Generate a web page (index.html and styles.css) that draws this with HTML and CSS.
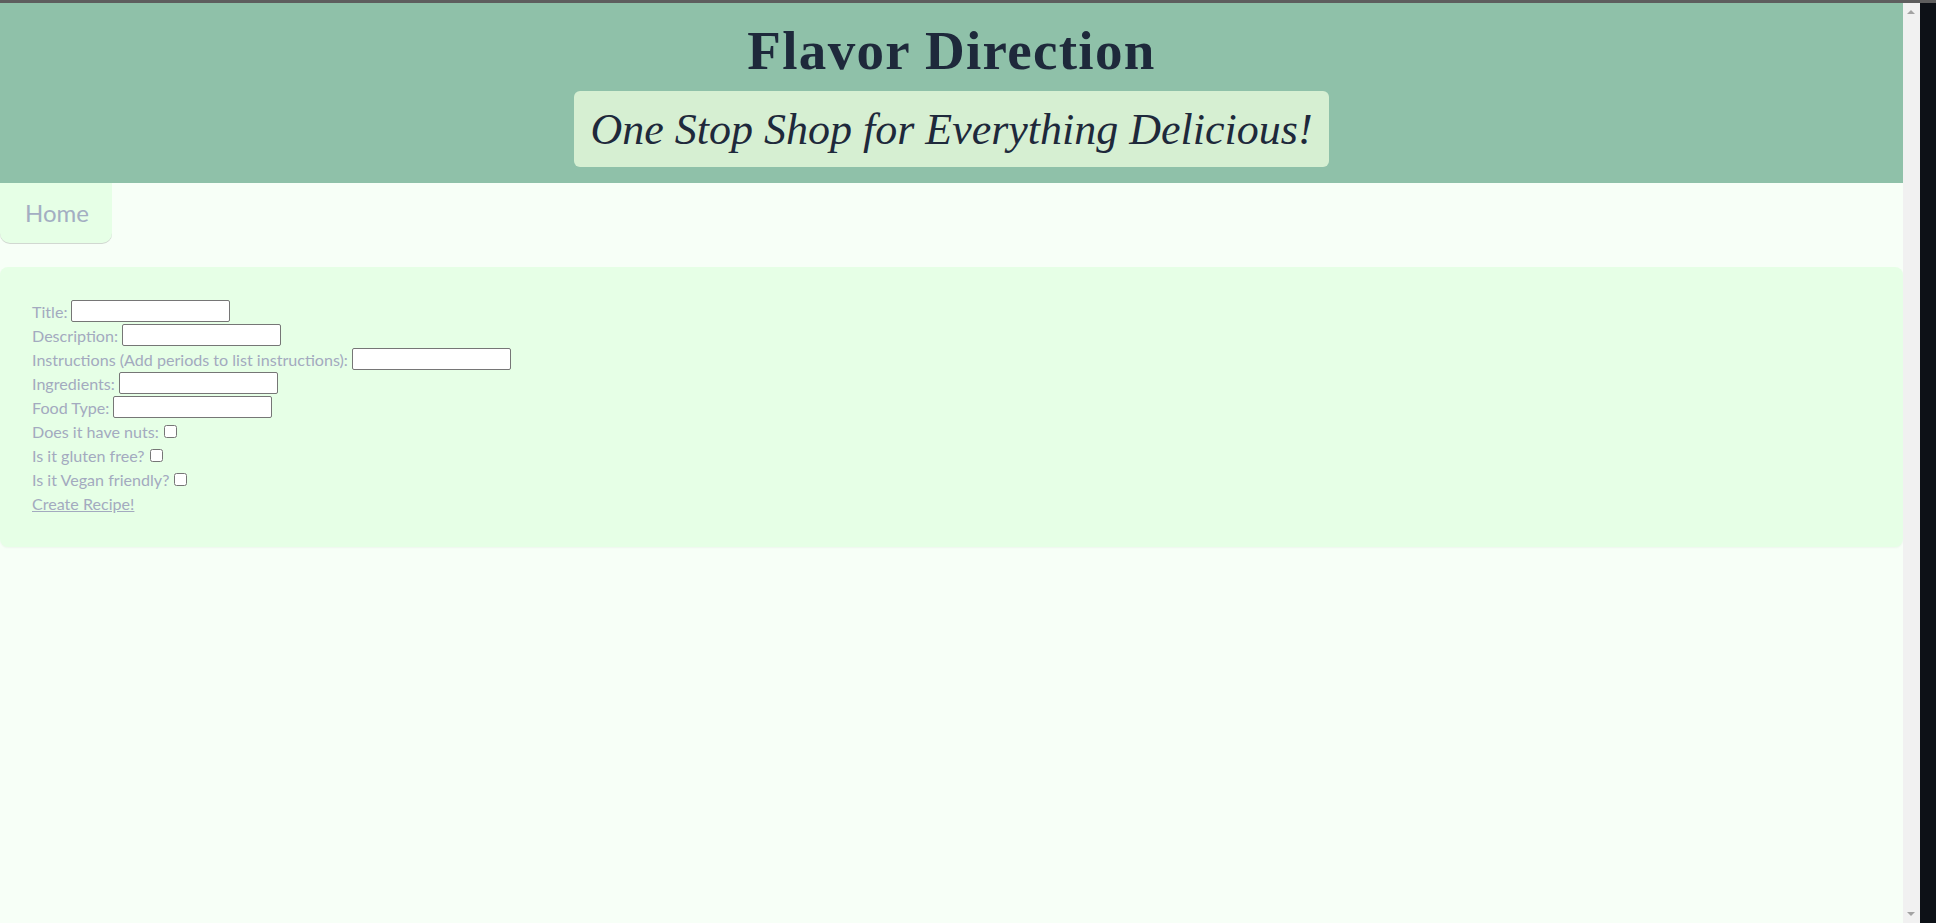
FILE: index.html
```html
<!DOCTYPE html>
<html lang="en">
<head>
<meta charset="utf-8">
<title>Flavor Direction</title>
<link rel="stylesheet" href="styles.css">
</head>
<body>
<div class="window">
  <div class="topbar"></div>
  <div class="frame">
    <div class="page">
      <header class="header">
        <h1 class="title">Flavor Direction</h1>
        <p class="tagline">One Stop Shop for Everything Delicious!</p>
      </header>
      <nav class="nav">
        <a class="nav-link">Home</a>
      </nav>
      <section class="card">
        <form class="recipe-form">
          <div class="row"><label>Title:</label><input type="text" class="field"></div>
          <div class="row"><label>Description:</label><input type="text" class="field"></div>
          <div class="row"><label>Instructions (Add periods to list instructions):</label><input type="text" class="field"></div>
          <div class="row"><label>Ingredients:</label><input type="text" class="field"></div>
          <div class="row"><label>Food Type:</label><input type="text" class="field"></div>
          <div class="row"><label>Does it have nuts:</label><input type="checkbox" class="check"></div>
          <div class="row"><label>Is it gluten free?</label><input type="checkbox" class="check"></div>
          <div class="row"><label>Is it Vegan friendly?</label><input type="checkbox" class="check"></div>
          <div class="row"><button type="button" class="submit">Create Recipe!</button></div>
        </form>
      </section>
    </div>
    <div class="scrollbar">
      <span class="arrow up"></span>
      <span class="arrow down"></span>
    </div>
    <div class="edge"></div>
  </div>
</div>
</body>
</html>
```

FILE: styles.css
```css
* { box-sizing: border-box; }
html, body { margin: 0; padding: 0; height: 100%; }
body { font-family: Lato, "Noto Sans", sans-serif; background: #0d1117; }

.window { display: flex; flex-direction: column; height: 923px; }
.topbar { height: 3px; background: #5e5e5e; flex: none; }
.frame { display: flex; flex: 1; min-height: 0; }
.page { flex: 1; background: #f7fff7; }
.scrollbar { width: 17px; background: #f1f1f1; position: relative; flex: none; }
.edge { width: 16px; background: #0d1117; flex: none; }
.arrow { position: absolute; left: 4px; width: 0; height: 0; border-left: 4px solid transparent; border-right: 4px solid transparent; }
.arrow.up { top: 7px; border-bottom: 4px solid #a3a3a3; }
.arrow.down { bottom: 7px; border-top: 4px solid #a3a3a3; }

.header { background: #8fc1a9; height: 180px; display: flex; flex-direction: column; align-items: center; padding-top: 18px; }
.title { margin: 0; font-family: "Liberation Serif", serif; font-weight: bold; font-size: 55px; letter-spacing: 1.3px; line-height: 60px; color: #1e293b; }
.tagline { margin: 10px 0 0; background: #d6efd2; border-radius: 6px; padding: 0 16px; height: 76px; display: flex; align-items: center; font-family: "Liberation Serif", serif; font-style: italic; font-size: 44px; color: #1e293b; }

.nav { display: flex; }
.nav-link { display: block; width: 112px; height: 60px; padding-left: 25px; line-height: 60px; font-size: 24px; color: #a3aec2; background: #e6ffe6; border-radius: 0 0 10px 10px; box-shadow: 0 1px 0 rgba(60,60,60,0.2); }

.card { margin-top: 24px; background: #e6ffe6; border-radius: 8px; padding: 32px; box-shadow: 0 1px 2px rgba(0,0,0,0.04); }
.recipe-form { display: flex; flex-direction: column; }
.row { display: flex; align-items: center; height: 24px; font-size: 16.1px; color: #a3aabf; }
.row label { white-space: pre; }
.field { margin-left: 4px; width: 159px; height: 22px; border: 1px solid #767676; border-radius: 2px; background: #fff; padding: 1px 2px; }
.check { margin: 0 0 0 5px; width: 13px; height: 13px; }
.submit { padding: 0; border: none; background: none; font: inherit; color: #a3aabf; text-decoration: underline; cursor: pointer; }
```
